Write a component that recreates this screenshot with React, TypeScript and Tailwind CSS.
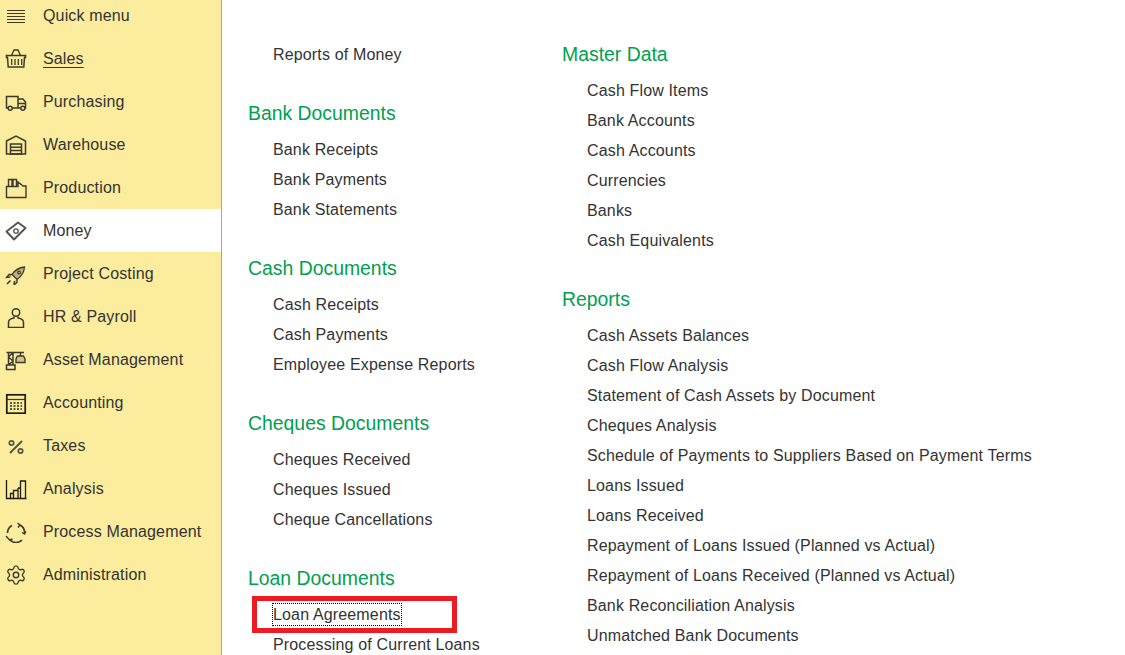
import type { ReactNode } from "react"
import { Settings } from "lucide-react"

const ico = (children: ReactNode) => (
  <svg width="22" height="22" viewBox="0 0 22 22" fill="none" stroke="#3b3a2c" strokeWidth="1.300" className="shrink-0">
    {children}
  </svg>
)

const icons: Record<string, ReactNode> = {
  menu: ico(<path d="M2 5.500h18M2 8.500h18M2 11.500h18M2 14.500h18M2 17.500h18" strokeWidth="1.200" />),
  basket: ico(
    <>
      <path d="M1.500 7.500h19v2h-1l-.7 9.500H3.200l-.7-9.500h-1z" strokeWidth="1.500" />
      <path d="M6.700 11v6M10 11v6M13.300 11v6M16.700 11v6M6.500 7.500L9 2h4l2.500 5.500" />
    </>
  ),
  truck: ico(
    <>
      <path d="M3 17H1.500V5.500h11.500V17H7.500M13 8h5l2.500 3v6H20M13 12.500h7M13 17h2.500" strokeWidth="1.500" />
      <circle cx="5.200" cy="17.200" r="2" strokeWidth="1.500" />
      <circle cx="17.800" cy="17.200" r="2" strokeWidth="1.500" />
    </>
  ),
  warehouse: ico(
    <>
      <path d="M1.500 7L11 2l9.500 5v13h-19z" strokeWidth="1.500" />
      <path d="M5.500 10h11v10h-11zM5.500 13.300h11M5.500 16.600h11" strokeWidth="1.500" />
    </>
  ),
  factory: ico(
    <path d="M1.500 20.500V9.500h2V2.500h3.500v7h1V2.500h3.500v7h1.500V5l5 4h3v11.500zM3.500 9.500h8" strokeWidth="1.400" />
  ),
  money: ico(
    <>
      <path d="M1.500 11.500L13 2.500l7.500 5.500L9 19.500z" strokeWidth="1.900" strokeLinejoin="round" stroke="#55544d" />
      <circle cx="11" cy="11" r="2.200" strokeWidth="1.300" stroke="#55544d" />
    </>
  ),
  rocket: ico(
    <>
      <path
        d="M7 11.500C10 7 14 4.500 19.500 4c-.5 5.500-3 9.500-7.500 12.500zM7 11.500H4l-2.500 3 3.800-.3M12 16.500v3l-3 2.500.3-4"
        fill="#6b6a58"
        fillOpacity="0.450"
      />
      <path d="M2 21l3.500-3.500" strokeWidth="1.600" />
      <circle cx="14" cy="9.500" r="1.300" fill="#fbec9e" />
    </>
  ),
  person: ico(
    <>
      <circle cx="11" cy="6.500" r="3.700" strokeWidth="1.500" />
      <path d="M9 10.500v1.500c-3.500.5-5.500 1.500-5.500 4.500v5h15v-5c0-3-2-4-5.500-4.500v-1.500" strokeWidth="1.500" />
    </>
  ),
  crane: ico(
    <>
      <path d="M1.500 16h8.500v4.500H1.500zM3.500 16V3.500M8 16V3.500M1.500 3.500h17.500M3.500 8l4.500-4.500M3.500 8L8 12M3.500 16L8 12" strokeWidth="1.500" />
      <path d="M15.500 3.500V7M12.500 7h6l1.500 3v3.500h-9V10z" strokeWidth="1.400" fill="#6b6a58" fillOpacity="0.300" />
    </>
  ),
  calc: ico(
    <>
      <rect x="1.800" y="2.800" width="18.400" height="18.400" stroke="#1d1c15" strokeWidth="1.700" />
      <path d="M2 7.500h18" strokeWidth="1.200" />
      <path d="M5 11h12M5 14h12M5 17h12" strokeWidth="1.800" strokeDasharray="2 1.500" stroke="#5a5944" />
    </>
  ),
  percent: ico(
    <>
      <path d="M5 18L17 6" strokeWidth="2" stroke="#55544a" />
      <circle cx="6.500" cy="8" r="2.200" strokeWidth="1.700" stroke="#55544a" />
      <circle cx="15.500" cy="16" r="2.200" strokeWidth="1.700" stroke="#55544a" />
    </>
  ),
  chart: ico(
    <path
      d="M1.500 2v18.500h20M5.500 20.500v-5h3v5M8.500 20.500v-8h4.500v8M13 20.500V10M15.500 20.500V3h5v17.500M13 10h2.500"
      strokeWidth="1.300"
      stroke="#1d1c15"
    />
  ),
  cycle: ico(
    <>
      <path d="M7 4.500A8.500 8.500 0 0 0 2.500 12M5 19a8.500 8.500 0 0 0 12 0M15 4a8.500 8.500 0 0 1 4.500 8" strokeWidth="1.700" />
      <path d="M12.500 2l2.500 2-2 2.500M1 15l3.500 4 3-1M21 10.500l-1.500 2.500-2.500-1.500" strokeWidth="1.400" />
    </>
  ),
  gear: <Settings size={22} strokeWidth={1.500} color="#3b3a2c" className="shrink-0" />,
}

const menu = [
  { label: "Quick menu", icon: "menu" },
  { label: "Sales", icon: "basket", underline: true },
  { label: "Purchasing", icon: "truck" },
  { label: "Warehouse", icon: "warehouse" },
  { label: "Production", icon: "factory" },
  { label: "Money", icon: "money", active: true },
  { label: "Project Costing", icon: "rocket" },
  { label: "HR & Payroll", icon: "person" },
  { label: "Asset Management", icon: "crane" },
  { label: "Accounting", icon: "calc" },
  { label: "Taxes", icon: "percent" },
  { label: "Analysis", icon: "chart" },
  { label: "Process Management", icon: "cycle" },
  { label: "Administration", icon: "gear" },
]

const leftGroups = [
  { title: "Bank Documents", items: ["Bank Receipts", "Bank Payments", "Bank Statements"] },
  { title: "Cash Documents", items: ["Cash Receipts", "Cash Payments", "Employee Expense Reports"] },
  { title: "Cheques Documents", items: ["Cheques Received", "Cheques Issued", "Cheque Cancellations"] },
  { title: "Loan Documents", items: ["Loan Agreements", "Processing of Current Loans"] },
]

const rightGroups = [
  {
    title: "Master Data",
    items: ["Cash Flow Items", "Bank Accounts", "Cash Accounts", "Currencies", "Banks", "Cash Equivalents"],
  },
  {
    title: "Reports",
    items: [
      "Cash Assets Balances",
      "Cash Flow Analysis",
      "Statement of Cash Assets by Document",
      "Cheques Analysis",
      "Schedule of Payments to Suppliers Based on Payment Terms",
      "Loans Issued",
      "Loans Received",
      "Repayment of Loans Issued (Planned vs Actual)",
      "Repayment of Loans Received (Planned vs Actual)",
      "Bank Reconciliation Analysis",
      "Unmatched Bank Documents",
    ],
  },
]

function Group({ title, items }: { title: string; items: string[] }) {
  return (
    <div className="mb-[22px]">
      <h2 className="h-[43px] leading-[43px] text-[19.400px] tracking-normal font-normal text-[#00a04f]">{title}</h2>
      {items.map((item) => (
        <div key={item} className="relative h-[30px] pl-[25px] leading-[30px] whitespace-nowrap">
          {item === "Loan Agreements" ? (
            <>
              <span className="inline-block leading-[21px] outline-1 outline-dotted outline-black">{item}</span>
              <div className="absolute left-[4px] top-[-4px] h-[37px] w-[205px] border-[5px] border-[#ed1c24]" />
            </>
          ) : (
            item
          )}
        </div>
      ))}
    </div>
  )
}

export default function App() {
  return (
    <div className="flex h-[655px] w-[1125px] overflow-hidden bg-white font-['Liberation_Sans',Arial,sans-serif] text-[16px] tracking-[0.150px] text-[#333333]">
      {/* Sidebar */}
      <aside className="h-full w-[222px] shrink-0 border-r border-[#a6a6a6] bg-[#fbec9e]">
        <div className="mt-[-6px]">
          {menu.map((m) => (
            <div
              key={m.label}
              className={`flex h-[43px] items-center gap-[16px] pl-[5px] ${m.active ? "bg-white" : ""}`}
            >
              {icons[m.icon]}
              <span className={m.underline ? "underline underline-offset-[3px]" : ""}>{m.label}</span>
            </div>
          ))}
        </div>
      </aside>

      {/* Content */}
      <main className="flex flex-1 pl-[26px]">
        <div className="w-[314px] shrink-0 pt-[33px]">
          <div className="mb-[22px] h-[37px] pl-[25px] pt-[7px] leading-[30px]">Reports of Money</div>
          {leftGroups.map((g) => (
            <Group key={g.title} title={g.title} items={g.items} />
          ))}
        </div>
        <div className="flex-1 pt-[33px]">
          {rightGroups.map((g) => (
            <Group key={g.title} title={g.title} items={g.items} />
          ))}
        </div>
      </main>
    </div>
  )
}
